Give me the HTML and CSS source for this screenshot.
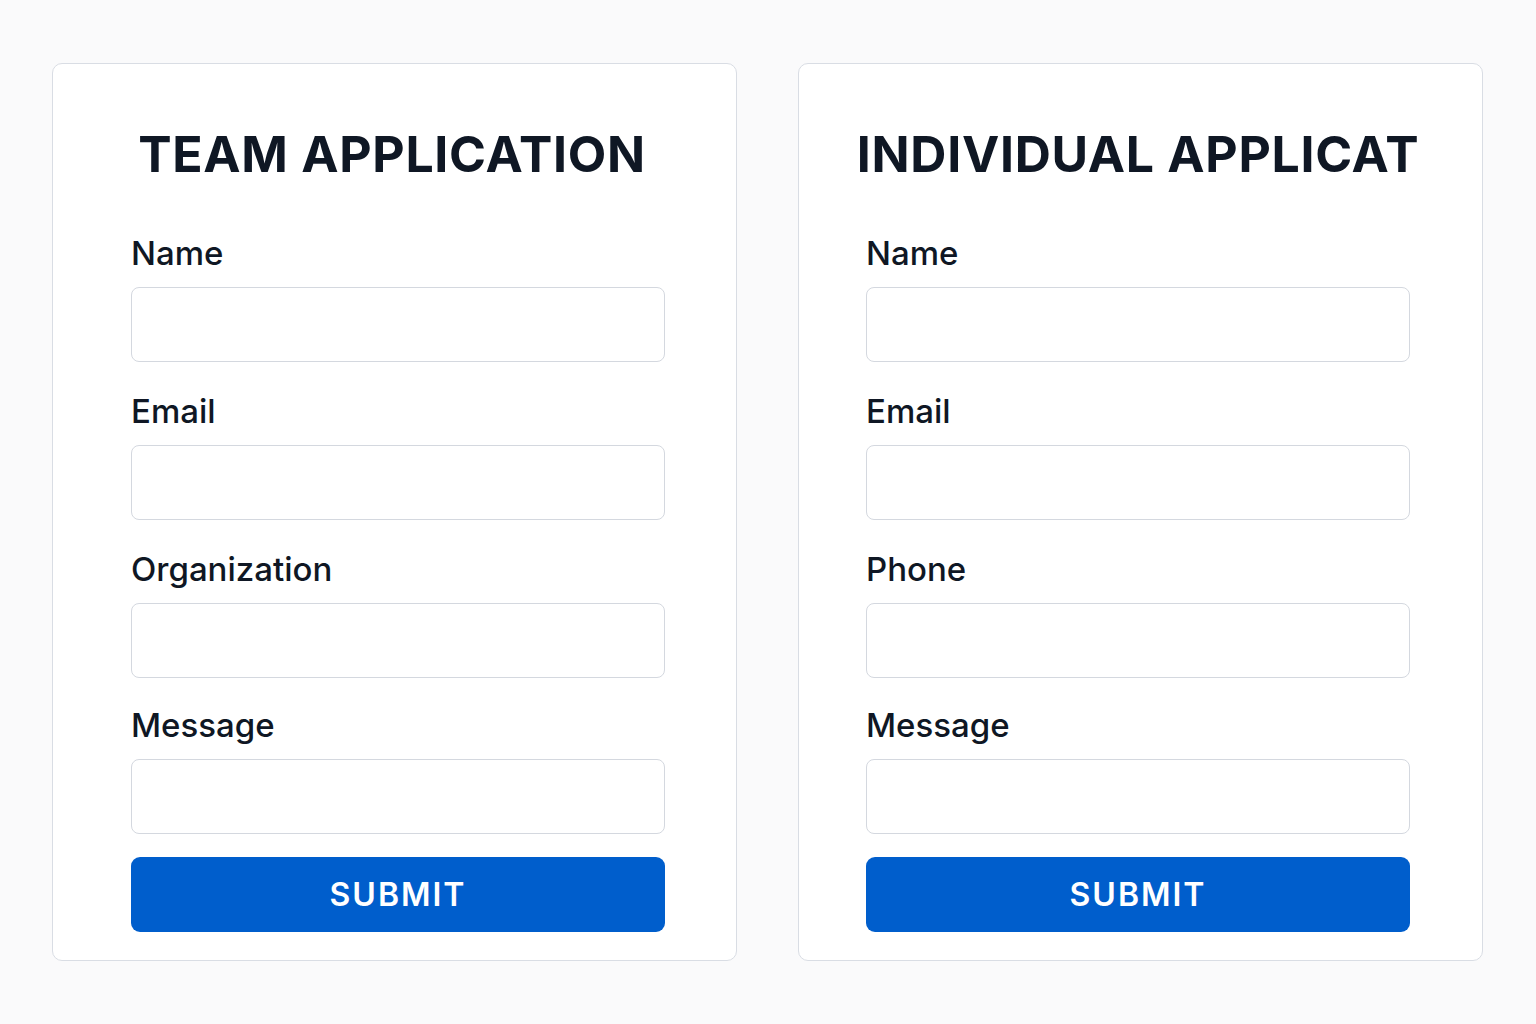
FILE: index.html
```html
<!DOCTYPE html>
<html lang="en">
<head>
<meta charset="utf-8">
<title>Applications</title>
<link rel="stylesheet" href="styles.css">
</head>
<body>
<main class="page">
  <section class="card card--team">
    <h1 class="card__title">TEAM APPLICATION</h1>
    <form class="form">
      <div class="field">
        <label class="field__label">Name</label>
        <input class="field__input" type="text">
      </div>
      <div class="field">
        <label class="field__label">Email</label>
        <input class="field__input" type="text">
      </div>
      <div class="field">
        <label class="field__label">Organization</label>
        <input class="field__input" type="text">
      </div>
      <div class="field">
        <label class="field__label">Message</label>
        <input class="field__input" type="text">
      </div>
      <button class="submit" type="button">SUBMIT</button>
    </form>
  </section>
  <section class="card card--individual">
    <h1 class="card__title">INDIVIDUAL APPLICAT</h1>
    <form class="form">
      <div class="field">
        <label class="field__label">Name</label>
        <input class="field__input" type="text">
      </div>
      <div class="field">
        <label class="field__label">Email</label>
        <input class="field__input" type="text">
      </div>
      <div class="field">
        <label class="field__label">Phone</label>
        <input class="field__input" type="text">
      </div>
      <div class="field">
        <label class="field__label">Message</label>
        <input class="field__input" type="text">
      </div>
      <button class="submit" type="button">SUBMIT</button>
    </form>
  </section>
</main>
</body>
</html>
```

FILE: styles.css
```css
* { box-sizing: border-box; }
html, body { margin: 0; padding: 0; }
body {
  background: #fafafb;
  font-family: Inter, "Liberation Sans", sans-serif;
  color: #0f1724;
}
.page {
  display: flex;
  gap: 61px;
  padding: 63px 53px 0 52px;
}
.card {
  width: 685px;
  height: 898px;
  background: #ffffff;
  border: 1px solid #d9dde4;
  border-radius: 10px;
  padding-top: 62px;
}
.card--team { padding-left: 78px; padding-right: 71px; }
.card--individual { padding-left: 67px; padding-right: 72px; }
.card__title {
  display: flex;
  justify-content: center;
  margin: 0 0 51px;
  font-size: 50px;
  line-height: 56px;
  font-weight: 700;
  letter-spacing: 0.7px;
  color: #0f1724;
  white-space: nowrap;
}
.card--team .card__title { margin-right: 12px; }
.form {
  display: flex;
  flex-direction: column;
}
.field {
  display: flex;
  flex-direction: column;
  margin-bottom: 29px;
}
.field:nth-child(3) { margin-bottom: 27px; }
.field:nth-child(4) { margin-bottom: 23px; }
.field__label {
  font-size: 33px;
  line-height: 40px;
  font-weight: 500;
  margin-bottom: 14px;
  color: #0f1724;
}
.field__input {
  height: 75px;
  border: 1px solid #d4d8df;
  border-radius: 8px;
  background: #fff;
  font: inherit;
}
.submit {
  height: 75px;
  border: none;
  border-radius: 9px;
  background: #005ecc;
  color: #ffffff;
  font-family: Inter, "Liberation Sans", sans-serif;
  font-size: 32px;
  font-weight: 600;
  letter-spacing: 2px;
}
```
